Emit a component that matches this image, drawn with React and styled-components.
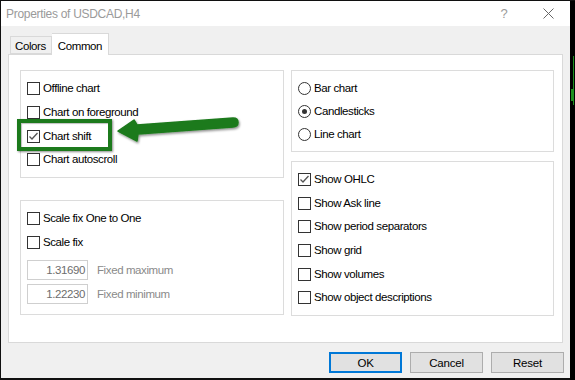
import React from "react";
import styled, { createGlobalStyle } from "styled-components";

const GlobalStyle = createGlobalStyle`
  html, body {
    margin: 0;
    padding: 0;
    background: #101010;
  }
  * { box-sizing: border-box; }
`;

const font = `"Liberation Sans", Arial, sans-serif`;

const Screen = styled.div`
  display: flex;
  width: 575px;
  height: 380px;
  padding: 1px 0 0 1px;
  overflow: hidden;
`;

const Window = styled.div`
  width: 569px;
  height: 377px;
  display: flex;
  flex-direction: column;
  background: #f0f0f0;
  font-family: ${font};
  font-size: 11.5px;
  letter-spacing: -0.4px;
  color: #000;
`;

const TitleBar = styled.div`
  height: 25px;
  background: #fff;
  display: flex;
  align-items: center;
  padding: 0 0 0 5px;
`;

const Title = styled.div`
  flex: 1;
  color: #9a9a9a;
  font-size: 12px;
  letter-spacing: -0.3px;
`;

const TitleButton = styled.div`
  width: 44px;
  height: 25px;
  display: flex;
  align-items: center;
  justify-content: center;
  color: #9a9a9a;
  font-size: 13px;
  letter-spacing: 0;
`;

const Body = styled.div`
  flex: 1;
  display: flex;
  flex-direction: column;
  padding: 7px 7px 0 7px;
`;

const TabRow = styled.div`
  display: flex;
  align-items: flex-end;
  padding-left: 2px;
  height: 21px;
  position: relative;
  z-index: 1;
`;

const Tab = styled.div`
  height: ${({ active }) => (active ? "22px" : "18px")};
  margin-bottom: ${({ active }) => (active ? "-1px" : "0")};
  padding: ${({ active }) => (active ? "2px 6px 0 6px" : "1px 5px 0 4px")};
  background: ${({ active }) => (active ? "#fff" : "#f0f0f0")};
  border: 1px solid #d9d9d9;
  border-bottom: ${({ active }) => (active ? "none" : "1px solid #d9d9d9")};
  border-left: ${({ active }) => (active ? "none" : "1px solid #d9d9d9")};
  display: flex;
  align-items: center;
`;

const Panel = styled.div`
  height: 289px;
  background: #fff;
  border: 1px solid #d9d9d9;
  display: flex;
  gap: 7px;
  padding: 15px 8px 0 11px;
`;

const Column = styled.div`
  width: ${({ w }) => w}px;
  display: flex;
  flex-direction: column;
  gap: ${({ gap }) => gap}px;
`;

const Group = styled.div`
  position: relative;
  height: ${({ h }) => h}px;
  border: 1px solid #dcdcdc;
  padding: 11px 0 0 6px;
  display: flex;
  flex-direction: column;
`;

const Row = styled.div`
  height: ${({ pitch }) => pitch || 25}px;
  display: flex;
  align-items: flex-start;
  gap: 3px;
`;

const Label = styled.span`
  line-height: 13px;
  color: ${({ disabled }) => (disabled ? "#8a8a8a" : "#000")};
`;

const Box = styled.span`
  width: 13px;
  height: 13px;
  flex: none;
  border: 1px solid #333;
  background: #fff;
  display: flex;
  align-items: center;
  justify-content: center;
  border-radius: ${({ round }) => (round ? "50%" : "0")};
`;

const Dot = styled.span`
  width: 5px;
  height: 5px;
  border-radius: 50%;
  background: #333;
`;

const InputRow = styled.div`
  height: 24px;
  display: flex;
  align-items: flex-start;
  gap: 9px;
`;

const Field = styled.div`
  width: 61px;
  height: 20px;
  border: 1px solid #cfcfcf;
  color: #6d6d6d;
  text-align: right;
  padding: 3px 2px 0 0;
  line-height: 13px;
`;

const FieldLabel = styled.span`
  color: #8a8a8a;
  line-height: 20px;
`;

const Highlight = styled.div`
  position: absolute;
  left: -4px;
  top: 48px;
  width: 95px;
  height: 32px;
  border: 4px solid #1c7a1c;
  box-shadow: 1px 1px 2px rgba(0, 0, 0, 0.45), inset 1px 1px 1px rgba(0, 0, 0, 0.25);
`;

const ArrowSvg = styled.svg`
  position: absolute;
  left: 94px;
  top: 42px;
  overflow: visible;
`;

const ButtonRow = styled.div`
  display: flex;
  justify-content: flex-end;
  gap: 8px;
  margin: 9px -1px 0 0;
`;

const Button = styled.div`
  width: 73px;
  height: 21px;
  background: #e1e1e1;
  border: ${({ primary }) => (primary ? "2px solid #0078d7" : "1px solid #adadad")};
  display: flex;
  align-items: center;
  justify-content: center;
  letter-spacing: -0.2px;
`;

const ChartEdge = styled.svg`
  flex: none;
`;

const Check = ({ checked }) => (
  <Box>
    {checked && (
      <svg width="11" height="11" viewBox="0 0 11 11">
        <polyline points="1.5,5.5 4,8 9.5,2" fill="none" stroke="#555" strokeWidth="1.3" />
      </svg>
    )}
  </Box>
);

const Radio = ({ checked }) => <Box round>{checked && <Dot />}</Box>;

const CheckRow = ({ label, checked, pitch }) => (
  <Row pitch={pitch}>
    <Check checked={checked} />
    <Label>{label}</Label>
  </Row>
);

const Arrow = () => (
  <ArrowSvg width="126" height="32" viewBox="0 0 126 32">
    <defs>
      <filter id="sh" x="-10%" y="-30%" width="130%" height="180%">
        <feDropShadow dx="1" dy="1.5" stdDeviation="1.2" floodColor="#000" floodOpacity="0.45" />
      </filter>
    </defs>
    <path
      d="M3 18 L19 7 L22 12 L118 5 Q123 5 123 9.5 Q123 13.5 118 14 L23 21 L22 28 Z"
      fill="#1c7a1c"
      stroke="#1c7a1c"
      strokeWidth="1.5"
      strokeLinejoin="round"
      filter="url(#sh)"
    />
  </ArrowSvg>
);

export default function App() {
  return (
    <>
      <GlobalStyle />
      <Screen>
        <Window>
          <TitleBar>
            <Title>Properties of USDCAD,H4</Title>
            <TitleButton>?</TitleButton>
            <TitleButton>
              <svg width="11" height="11" viewBox="0 0 11 11">
                <path d="M0.5 0.5 L10.5 10.5 M10.5 0.5 L0.5 10.5" stroke="#666" strokeWidth="1" />
              </svg>
            </TitleButton>
          </TitleBar>
          <Body>
            <TabRow>
              <Tab>Colors</Tab>
              <Tab active>Common</Tab>
            </TabRow>
            <Panel>
              <Column w={264} gap={22}>
                <Group h={108}>
                  <CheckRow label="Offline chart" />
                  <CheckRow label="Chart on foreground" />
                  <CheckRow label="Chart shift" checked />
                  <CheckRow label="Chart autoscroll" />
                  <Highlight />
                  <Arrow />
                </Group>
                <Group h={115}>
                  <CheckRow label="Scale fix One to One" pitch={24} />
                  <CheckRow label="Scale fix" pitch={24} />
                  <InputRow>
                    <Field>1.31690</Field>
                    <FieldLabel>Fixed maximum</FieldLabel>
                  </InputRow>
                  <InputRow>
                    <Field>1.22230</Field>
                    <FieldLabel>Fixed minimum</FieldLabel>
                  </InputRow>
                </Group>
              </Column>
              <Column w={263} gap={9}>
                <Group h={82}>
                  <Row>
                    <Radio />
                    <Label>Bar chart</Label>
                  </Row>
                  <Row>
                    <Radio checked />
                    <Label>Candlesticks</Label>
                  </Row>
                  <Row>
                    <Radio />
                    <Label>Line chart</Label>
                  </Row>
                </Group>
                <Group h={155}>
                  <CheckRow label="Show OHLC" checked pitch={24} />
                  <CheckRow label="Show Ask line" pitch={24} />
                  <CheckRow label="Show period separators" pitch={24} />
                  <CheckRow label="Show grid" pitch={24} />
                  <CheckRow label="Show volumes" pitch={24} />
                  <CheckRow label="Show object descriptions" pitch={24} />
                </Group>
              </Column>
            </Panel>
            <ButtonRow>
              <Button primary>OK</Button>
              <Button>Cancel</Button>
              <Button>Reset</Button>
            </ButtonRow>
          </Body>
        </Window>
        <ChartEdge width="5" height="379" viewBox="0 0 5 379">
          <rect x="0" y="0" width="5" height="379" fill="#000" />
          <line x1="3.5" y1="55" x2="3.5" y2="104" stroke="#1f8f1f" strokeWidth="1" />
          <rect x="1" y="88" width="3" height="12" fill="#1f8f1f" />
        </ChartEdge>
      </Screen>
    </>
  );
}
